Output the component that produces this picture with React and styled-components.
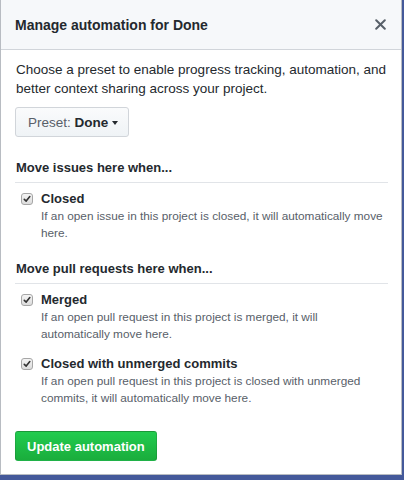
import React from 'react';
import styled, { createGlobalStyle } from 'styled-components';

const GlobalStyle = createGlobalStyle`
    html, body {
        margin: 0;
        padding: 0;
        background: #44599a;
        height: 100%;
    }
    body {
        font-family: "Liberation Sans", Arial, sans-serif;
        color: #24292e;
    }
`;

const Dialog = styled.div`
    box-sizing: border-box;
    width: 402px;
    height: 475px;
    background: #fff;
    border: 1px solid #b8bcc2;
    border-top: none;
    display: flex;
    flex-direction: column;
    overflow: hidden;
`;

const Header = styled.div`
    box-sizing: border-box;
    flex-shrink: 0;
    height: 50px;
    background: #f6f8fa;
    border-bottom: 1px solid #d1d5da;
    display: flex;
    align-items: center;
    justify-content: space-between;
    padding: 0 15px 0 14px;
`;

const Title = styled.h3`
    margin: 0;
    font-size: 14px;
    font-weight: bold;
    color: #24292e;
`;

const CloseButton = styled.button`
    border: none;
    background: none;
    padding: 0;
    width: 12px;
    height: 12px;
    display: flex;
    align-items: center;
    justify-content: center;
    cursor: pointer;
`;

const Body = styled.div`
    padding: 11px 13px 12px 14px;
    display: flex;
    flex-direction: column;
    flex: 1;
`;

const Intro = styled.p`
    margin: 0;
    font-size: 13.5px;
    line-height: 18.5px;
    padding-left: 1px;
`;

const PresetButton = styled.button`
    align-self: flex-start;
    box-sizing: border-box;
    margin-top: 9px;
    height: 30px;
    padding: 0 10px 0 12px;
    font-family: inherit;
    font-size: 13.5px;
    white-space: nowrap;
    color: #586069;
    background: linear-gradient(#fafbfc, #eff3f6);
    border: 1px solid #d1d5da;
    border-radius: 3px;
    display: flex;
    align-items: center;
    gap: 4px;
    cursor: pointer;

    strong {
        color: #24292e;
    }
`;

const Caret = styled.span`
    display: inline-block;
    width: 0;
    height: 0;
    border-left: 3.5px solid transparent;
    border-right: 3.5px solid transparent;
    border-top: 4px solid #24292e;
    margin-top: 1px;
`;

const SectionHeading = styled.h4`
    margin: ${p => p.$first ? '22px' : '19px'} 0 0;
    padding: 0 0 5px 1px;
    font-size: 13px;
    line-height: 18px;
    font-weight: bold;
    border-bottom: 1px solid #e1e4e8;
`;

const Option = styled.label`
    display: grid;
    grid-template-columns: 12px 1fr;
    column-gap: 8px;
    padding-left: 6px;
    margin-top: ${p => p.$gap}px;
`;

const Box = styled.span`
    box-sizing: border-box;
    width: 12px;
    height: 12px;
    margin-top: 3px;
    border: 1px solid #a6a6a6;
    border-radius: 3px;
    background: linear-gradient(#f4f4f4, #dcdcdc);
    display: flex;
    align-items: center;
    justify-content: center;
`;

const OptionTitle = styled.span`
    font-size: 13px;
    line-height: 18px;
    font-weight: bold;
`;

const OptionNote = styled.span`
    grid-column: 2;
    font-size: 11.8px;
    line-height: 16.5px;
    color: #586069;
`;

const SubmitButton = styled.button`
    align-self: flex-start;
    box-sizing: border-box;
    margin-top: 25px;
    height: 30px;
    padding: 0 11px;
    font-family: inherit;
    font-size: 13px;
    font-weight: bold;
    color: #fff;
    background: linear-gradient(#22cc4f, #1aad3c);
    border: 1px solid rgba(27, 31, 35, 0.15);
    border-radius: 3px;
    cursor: pointer;
`;

function Check() {
    return (
        <Box>
            <svg width="8" height="8" viewBox="0 0 8 8">
                <path d="M1.3 4.3 L3.2 6.1 L6.8 1.6" fill="none" stroke="#333" strokeWidth="1.6" strokeLinecap="round" strokeLinejoin="round" />
            </svg>
        </Box>
    );
}

function AutomationOption({ title, note, gap }) {
    return (
        <Option $gap={gap}>
            <Check />
            <OptionTitle>{title}</OptionTitle>
            <OptionNote>{note}</OptionNote>
        </Option>
    );
}

export default function App() {
    return (
        <>
            <GlobalStyle />
            <Dialog>
                <Header>
                    <Title>Manage automation for Done</Title>
                    <CloseButton aria-label="Close">
                        <svg width="11" height="11" viewBox="0 0 11 11">
                            <path d="M1.2 1.2 L9.8 9.8 M9.8 1.2 L1.2 9.8" stroke="#586069" strokeWidth="2" strokeLinecap="round" />
                        </svg>
                    </CloseButton>
                </Header>
                <Body>
                    <Intro>
                        Choose a preset to enable progress tracking, automation, and better context sharing across your project.
                    </Intro>
                    <PresetButton>
                        <span>Preset: <strong>Done</strong></span>
                        <Caret />
                    </PresetButton>

                    <SectionHeading $first>Move issues here when...</SectionHeading>
                    <AutomationOption
                        gap={7}
                        title="Closed"
                        note="If an open issue in this project is closed, it will automatically move here."
                    />

                    <SectionHeading>Move pull requests here when...</SectionHeading>
                    <AutomationOption
                        gap={7}
                        title="Merged"
                        note="If an open pull request in this project is merged, it will automatically move here."
                    />
                    <AutomationOption
                        gap={13}
                        title="Closed with unmerged commits"
                        note="If an open pull request in this project is closed with unmerged commits, it will automatically move here."
                    />

                    <SubmitButton>Update automation</SubmitButton>
                </Body>
            </Dialog>
        </>
    );
}
